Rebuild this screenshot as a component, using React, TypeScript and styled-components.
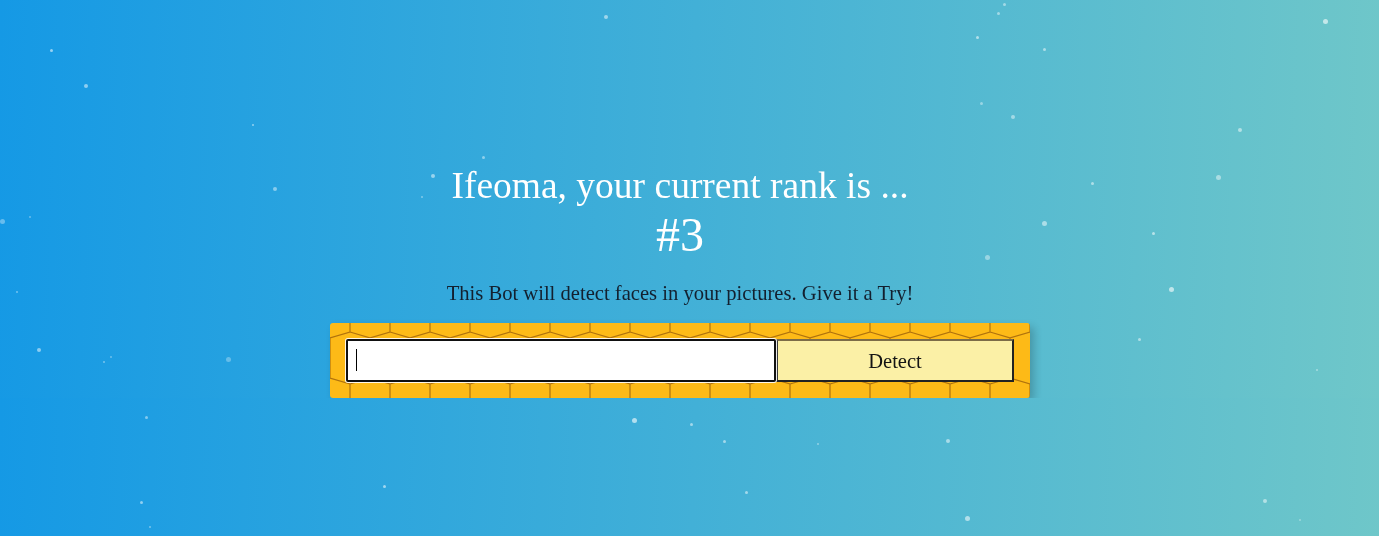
import React from 'react';
import styled, { createGlobalStyle } from 'styled-components';

const hexSvg = `<svg xmlns='http://www.w3.org/2000/svg' width='40' height='92'><path d='M20 0V9L0 15V55L20 61V92M20 9L40 15V55L20 61' fill='none' stroke='#b0720c' stroke-width='1.2'/></svg>`;
const hexUrl = `url("data:image/svg+xml,${encodeURIComponent(hexSvg)}")`;

const GlobalStyle = createGlobalStyle`
  html {
    background: linear-gradient(92deg, #1599e5 0%, #6fc7c9 100%);
    background-size: 100% 398px;
    background-repeat: repeat;
    min-height: 100%;
  }
  body {
    margin: 0;
    font-family: 'Liberation Serif', 'Times New Roman', serif;
  }
`;

const Sky = styled.div`
  position: fixed;
  inset: 0;
  pointer-events: none;
  z-index: 0;
`;

const Dot = styled.span<{ $size: number; $alpha: number }>`
  position: absolute;
  width: ${(p) => p.$size}px;
  height: ${(p) => p.$size}px;
  margin: ${(p) => -p.$size / 2}px 0 0 ${(p) => -p.$size / 2}px;
  border-radius: 50%;
  background: rgba(255, 255, 255, ${(p) => p.$alpha});
`;

const Page = styled.main`
  position: relative;
  z-index: 1;
  display: flex;
  flex-direction: column;
  align-items: center;
  padding: 165px 19px 0 0;
  text-align: center;
`;

const Greeting = styled.div`
  color: #ffffff;
  font-size: 37.5px;
  line-height: 42px;
`;

const RankNumber = styled.div`
  color: #ffffff;
  font-size: 48px;
  line-height: 56px;
`;

const Tagline = styled.p`
  margin: 18px 0 0;
  color: #13202f;
  font-size: 20.6px;
  line-height: 24px;
`;

const FormCard = styled.div`
  box-sizing: border-box;
  margin-top: 18px;
  width: 700px;
  padding: 16px;
  border-radius: 3px;
  background-color: #fdba17;
  background-image: ${hexUrl};
  background-size: 40px 92px;
  box-shadow: 4px 4px 8px 0 rgba(0, 0, 0, 0.2);
  display: flex;
`;

const Field = styled.div`
  position: relative;
  width: 430px;
  height: 43px;

  &::after {
    content: '';
    position: absolute;
    left: 10px;
    top: 10px;
    width: 1px;
    height: 22px;
    background: #000;
  }
`;

const UrlInput = styled.input`
  box-sizing: border-box;
  width: 100%;
  height: 100%;
  padding: 0 8px;
  border: 2px solid #111111;
  border-radius: 2px;
  background: #ffffff;
  box-shadow: 0 0 0 1px rgba(255, 255, 255, 0.9);
  outline: none;
  font-family: 'Liberation Serif', serif;
  font-size: 20px;
  caret-color: transparent;
`;

const DetectButton = styled.button`
  box-sizing: border-box;
  width: 238px;
  height: 43px;
  padding: 0;
  border-width: 2px;
  border-style: solid;
  border-color: #7c6c48 #222222 #222222 #3a3a3a;
  background: #fbf0a6;
  color: #141414;
  font-family: 'Liberation Serif', serif;
  font-size: 20.5px;
  line-height: 41px;
  cursor: pointer;
`;

const dots: [number, number, number, number][] = [
  [51, 50, 3, 0.55], [86, 86, 4, 0.5], [253, 125, 2, 0.5], [275, 189, 4, 0.45],
  [2, 221, 5, 0.35], [17, 292, 2, 0.4], [39, 350, 4, 0.5], [104, 362, 2, 0.4],
  [111, 357, 2, 0.35], [228, 359, 5, 0.3], [146, 417, 3, 0.45], [384, 486, 3, 0.55],
  [141, 502, 3, 0.5], [150, 527, 2, 0.4], [634, 420, 5, 0.6], [691, 424, 3, 0.5],
  [724, 441, 3, 0.5], [746, 492, 3, 0.5], [818, 444, 2, 0.4], [948, 441, 4, 0.5],
  [967, 518, 5, 0.55], [1265, 501, 4, 0.5], [1325, 21, 5, 0.6], [1240, 130, 4, 0.5],
  [1218, 177, 5, 0.45], [1153, 233, 3, 0.55], [1171, 289, 5, 0.6], [1139, 339, 3, 0.5],
  [1044, 223, 5, 0.5], [987, 257, 5, 0.4], [1092, 183, 3, 0.5], [1013, 117, 4, 0.45],
  [981, 103, 3, 0.4], [977, 37, 3, 0.55], [1044, 49, 3, 0.5], [998, 13, 3, 0.45],
  [1004, 4, 3, 0.45], [606, 17, 4, 0.5], [483, 157, 3, 0.45], [433, 176, 4, 0.5],
  [422, 197, 2, 0.4], [30, 217, 2, 0.35], [1317, 370, 2, 0.4], [1300, 520, 2, 0.35],
];

export default function App() {
  return (
    <>
      <GlobalStyle />
      <Sky>
        {dots.map(([x, y, s, a], i) => (
          <Dot key={i} $size={s} $alpha={a} style={{ left: x, top: y }} />
        ))}
      </Sky>
      <Page>
        <Greeting>Ifeoma, your current rank is ...</Greeting>
        <RankNumber>#3</RankNumber>
        <Tagline>This Bot will detect faces in your pictures. Give it a Try!</Tagline>
        <FormCard>
          <Field>
            <UrlInput type="text" autoFocus />
          </Field>
          <DetectButton type="button">Detect</DetectButton>
        </FormCard>
      </Page>
    </>
  );
}
